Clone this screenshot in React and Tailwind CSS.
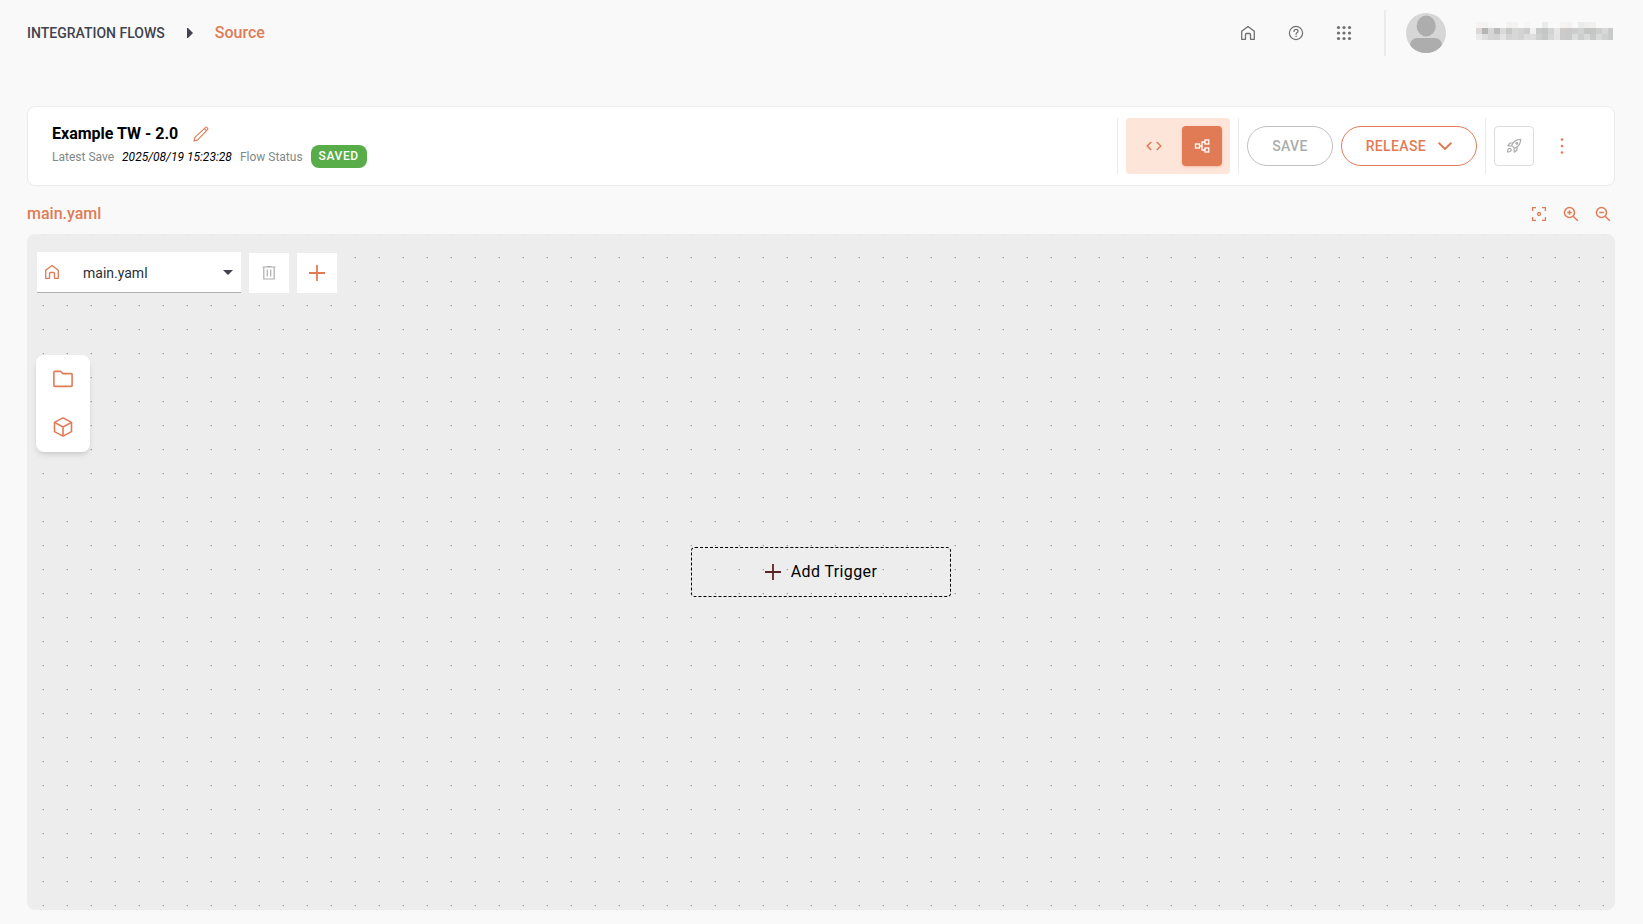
import React, { useState } from 'react';

const HomeIcon = ({ className }) => (
  <svg className={className} width="16" height="16" viewBox="0 0 16 16" fill="none" stroke="currentColor" strokeWidth="1.3">
    <path d="M1.7 14.300V6.300L8 1.500l6.300 4.800v8h-3.800V9.500c0-.6-.4-1-1-1h-3c-.6 0-1 .4-1 1v4.800z" strokeLinejoin="round" />
  </svg>
);

const HelpIcon = () => (
  <svg width="16" height="16" viewBox="0 0 16 16" fill="none" stroke="currentColor" strokeWidth="1.2">
    <circle cx="8" cy="8" r="6.6" />
    <path d="M6 6.4c0-1.2.9-2 2-2s2 .7 2 1.8c0 1.3-1.900 1.500-1.900 3" strokeLinecap="round" />
    <circle cx="8.1" cy="11.2" r="0.8" fill="currentColor" stroke="none" />
  </svg>
);

const AppsIcon = () => (
  <svg width="16" height="16" viewBox="0 0 16 16" fill="currentColor">
    {[2.5, 8, 13.5].map((y) => [2.5, 8, 13.5].map((x) => <circle key={`${x}-${y}`} cx={x} cy={y} r="1.6" />))}
  </svg>
);

const AvatarIcon = () => (
  <svg width="40" height="40" viewBox="0 0 40 40">
    <clipPath id="avatar"><circle cx="20" cy="20" r="20" /></clipPath>
    <g clipPath="url(#avatar)">
      <rect width="40" height="40" fill="#d6d6d6" />
      <ellipse cx="20.200" cy="13" rx="9.600" ry="10.400" fill="#adadad" />
      <rect x="4" y="25" width="32" height="20" rx="7" fill="#adadad" />
    </g>
  </svg>
);

// Redacted user name, three rows of 6px blocks
const NAME_BLOCKS = [
  ['#f5f3f1', '#f5f3f1', '#f8f7f6', null, null, '#f3f1ef', '#f4f3f1', null, '#f6f5f4', null, null, '#e9ebea', null, null, '#f6f3f1', '#f4f2f0', null, '#e9ebea', '#efefee', '#f3f1ef', null, null, null],
  ['#dcd8d8', '#b4b6b5', '#d5d6d5', '#bbbbbb', '#d9dad9', '#c6c8c7', '#d6d7d6', '#d2d3d2', '#cbcccb', '#f1f1f1', '#c8cac9', '#c4c6c5', '#d2d3d2', '#e6e6e6', '#cbcbca', '#cbcac8', '#cccecd', '#d0d2d1', '#c4c6c5', '#c4c6c5', '#cdcfce', '#d6d7d6', '#c9cbca'],
  ['#ebebeb', '#dedfde', '#d4d5d4', '#d2d3d2', '#e2e3e2', '#d2d3d2', '#d6d7d6', '#d2d3d2', '#dededf', '#dededf', '#cecfce', '#c6c8c7', '#d6d7d6', '#e4e4e4', '#cacccb', '#c8cac9', '#dcdcde', '#cccecd', '#dadadc', '#c8cac9', '#d9dad9', '#cfd1d0', '#c9cbca'],
];

const UserName = () => (
  <svg width="137" height="18" viewBox="0 0 137 18" shapeRendering="crispEdges">
    {NAME_BLOCKS.map((row, y) =>
      row.map((fill, x) => fill && <rect key={`${x}-${y}`} x={x * 6} y={y * 6} width="6" height="6" fill={fill} />)
    )}
  </svg>
);

const PencilIcon = () => (
  <svg width="16" height="16" viewBox="0 0 16 16" fill="none" stroke="currentColor" strokeWidth="1.100" strokeLinejoin="round">
    <path d="M1 15l.9-3.600L12.600 1.300c.3-.3.800-.3 1.100 0l1 1c.3.300.3.800 0 1.100L4.500 14.100z" />
    <path d="M11.300 2.600l2.100 2.100" />
  </svg>
);

const CodeIcon = () => (
  <svg width="16" height="16" viewBox="0 0 16 16" fill="none" stroke="currentColor" strokeWidth="1.500">
    <path d="M5.200 4L1.200 8l4 4M10.800 4l4 4-4 4" />
  </svg>
);

const FlowIcon = () => (
  <svg width="16" height="16" viewBox="0 0 16 16" fill="none" stroke="currentColor" strokeWidth="1.300">
    <rect x="1.500" y="6" width="4" height="4" />
    <rect x="11" y="2" width="3.800" height="4" />
    <rect x="11" y="10" width="3.800" height="4" />
    <path d="M5.500 8H8M11 4H8v8h3" />
  </svg>
);

const RocketIcon = () => (
  <svg width="16" height="16" viewBox="0 0 16 16" fill="none" stroke="currentColor" strokeWidth="1.200" strokeLinejoin="round">
    <path d="M14.700 1.300C10.500 1.200 7.800 2.800 5.600 7.300l3.100 3.100C13.200 8.200 14.800 5.500 14.700 1.300z" />
    <circle cx="10.800" cy="5.200" r="0.900" />
    <path d="M7 5H4L1.800 7.600l3.600.5M11 9v3l-2.600 2.200-.5-3.600" />
    <path d="M4.800 10.800c-.7-.7-1.800-.7-2.400 0-.7.700-.9 3.200-.9 3.200s2.600-.2 3.300-.9c.6-.6.6-1.700 0-2.300z" />
  </svg>
);

const FitIcon = () => (
  <svg width="16" height="16" viewBox="0 0 16 16" fill="none" stroke="currentColor" strokeWidth="1.300">
    <path d="M1.600 5V1.600H5M11 1.600h3.400V5M14.400 11v3.400H11M5 14.400H1.600V11" />
    <circle cx="8" cy="8" r="1.500" />
  </svg>
);

const ZoomIcon = ({ plus }) => (
  <svg width="16" height="16" viewBox="0 0 16 16" fill="none" stroke="currentColor" strokeWidth="1.500">
    <circle cx="6.500" cy="6.500" r="5" />
    <path d="M10.200 10.200l4.600 4.600" />
    <path d={plus ? 'M4.200 6.500h4.600M6.500 4.200v4.600' : 'M4.200 6.500h4.600'} />
  </svg>
);

const TrashIcon = () => (
  <svg width="16" height="16" viewBox="0 0 16 16" fill="none" stroke="currentColor" strokeWidth="1.200">
    <path d="M1.500 2h13M5.500 1.500h5M2.800 2v12h10.400V2M6.300 4.500v7M9.700 4.500v7" />
  </svg>
);

const PlusIcon = () => (
  <svg width="16" height="16" viewBox="0 0 16 16" fill="none" stroke="currentColor" strokeWidth="1.800">
    <path d="M8 0v16M0 8h16" />
  </svg>
);

const FolderIcon = () => (
  <svg width="20" height="20" viewBox="0 0 20 20" fill="none" stroke="currentColor" strokeWidth="1.600" strokeLinejoin="round">
    <path d="M.9 16.600V3.200c0-.5.300-.8.800-.8h6.100l1.800 2.200h8.700c.5 0 .8.300.8.800v11.200c0 .5-.3.800-.8.800H1.700c-.5 0-.8-.3-.8-.8z" />
  </svg>
);

const CubeIcon = () => (
  <svg width="20" height="20" viewBox="0 0 20 20" fill="none" stroke="currentColor" strokeWidth="1.600" strokeLinejoin="round">
    <path d="M10 .9l8.500 4.500v9.200L10 19.100l-8.500-4.500V5.400z" />
    <path d="M1.500 5.400L10 10l8.500-4.600M10 10v9.100" />
  </svg>
);

const Divider = () => <span className="w-px self-stretch bg-[#ebebeb]" />;

const TopBar = () => (
  <header className="flex h-[66px] items-center justify-between">
    <nav className="flex items-center">
      <a href="#flows" className="text-sm font-medium text-[#41434e]">INTEGRATION FLOWS</a>
      <svg className="ml-[22px] text-[#41434e]" width="6" height="10" viewBox="0 0 6 10" fill="currentColor">
        <path d="M0 0h1l5 5-5 5H0z" />
      </svg>
      <a href="#source" className="ml-[22px] text-base font-medium text-[#e07b56]">Source</a>
    </nav>
    <div className="flex items-center text-[#6f6f6f]">
      <div className="flex gap-8">
        <button type="button" aria-label="Home"><HomeIcon /></button>
        <button type="button" aria-label="Help"><HelpIcon /></button>
        <button type="button" aria-label="Apps"><AppsIcon /></button>
      </div>
      <span className="ml-8 h-[46px] w-0.5 bg-[#ebebeb]" />
      <span className="ml-5"><AvatarIcon /></span>
      <span className="mr-0.5 ml-[30px] pb-1"><UserName /></span>
    </div>
  </header>
);

const FlowHeader = () => {
  const [view, setView] = useState('flow');
  const active = 'rounded bg-[#e07b56] text-white shadow shadow-[#e07b56]/30';

  return (
    <section className="mt-10 flex h-20 items-center justify-between rounded-lg border border-[#ebebeb] bg-white pr-8 pl-6">
      <div className="flex flex-col gap-px">
        <div className="flex items-center">
          <h1 className="text-base leading-5 font-bold text-black">Example TW - 2.0</h1>
          <button type="button" aria-label="Rename" className="ml-[15px] text-[#e07b56]"><PencilIcon /></button>
        </div>
        <div className="flex items-center gap-2 text-xs text-[#7f8a86]">
          <span>Latest Save</span>
          <span className="text-black italic">2025/08/19 15:23:28</span>
          <span>Flow Status</span>
          <span className="rounded-lg bg-[#58ad48] px-2 py-1 text-xs leading-[15px] font-medium tracking-wider text-white">SAVED</span>
        </div>
      </div>
      <div className="flex h-14 items-center gap-2">
        <Divider />
        <div className="flex h-14 items-center gap-2 rounded bg-[#fde5da] px-2 text-[#e07b56]">
          <button
            type="button"
            aria-label="Code view"
            onClick={() => setView('code')}
            className={`flex size-10 items-center justify-center ${view === 'code' ? active : ''}`}
          >
            <CodeIcon />
          </button>
          <button
            type="button"
            aria-label="Flow view"
            onClick={() => setView('flow')}
            className={`flex size-10 items-center justify-center ${view === 'flow' ? active : ''}`}
          >
            <FlowIcon />
          </button>
        </div>
        <Divider />
        <button type="button" disabled className="h-10 rounded-full border border-[#c0c0c0] px-6 text-sm font-medium tracking-wide text-[#a8adab]">
          SAVE
        </button>
        <button type="button" className="flex h-10 items-center gap-3 rounded-full border border-[#e07b56] px-6 text-sm font-medium tracking-wide text-[#e07b56]">
          RELEASE
          <svg width="14" height="8" viewBox="0 0 14 8" fill="none" stroke="currentColor" strokeWidth="2">
            <path d="M.6.700L7 7 13.400.700" />
          </svg>
        </button>
        <Divider />
        <button type="button" aria-label="Deploy" disabled className="flex size-10 items-center justify-center rounded border border-[#dcdcdc] text-[#adadad]">
          <RocketIcon />
        </button>
        <button type="button" aria-label="More" className="flex size-10 items-center justify-center text-[#e07b56]">
          <svg width="4" height="16" viewBox="0 0 4 16" fill="currentColor">
            <circle cx="2" cy="1.500" r="1.300" />
            <circle cx="2" cy="8" r="1.300" />
            <circle cx="2" cy="14.500" r="1.300" />
          </svg>
        </button>
      </div>
    </section>
  );
};

const CanvasToolbar = () => (
  <div className="relative flex items-end gap-2 pt-[18px] pl-[10px]">
    <div className="relative flex h-[41px] w-[204px] items-center border-b border-[#b0b0b0] bg-white">
      <HomeIcon className="pointer-events-none absolute left-[7px] text-[#e07b56]" />
      <select aria-label="File" className="h-full w-full appearance-none pt-0.5 pl-[46px] text-sm text-[#2d2d35]">
        <option>main.yaml</option>
      </select>
      <svg className="pointer-events-none absolute right-2 text-[#41434e]" width="10" height="5" viewBox="0 0 10 5" fill="currentColor">
        <path d="M0 0h10L5 5z" />
      </svg>
    </div>
    <button type="button" aria-label="Delete file" disabled className="flex size-10 items-center justify-center bg-white text-[#adadad]">
      <TrashIcon />
    </button>
    <button type="button" aria-label="Add file" className="flex size-10 items-center justify-center bg-white text-[#e07b56]">
      <PlusIcon />
    </button>
  </div>
);

const Canvas = () => (
  <section className="relative flex-1 overflow-hidden rounded-lg bg-[#ededed]">
    <svg className="absolute inset-0 size-full">
      <pattern id="dots" x="4" y="11" width="24" height="24" patternUnits="userSpaceOnUse">
        <circle cx="12.300" cy="12.600" r="0.700" fill="#81818a" />
      </pattern>
      <rect width="100%" height="100%" fill="url(#dots)" />
    </svg>
    <CanvasToolbar />
    <div className="relative mt-[62px] ml-[9px] flex h-[97px] w-[54px] flex-col items-center rounded-lg bg-white text-[#e07b56] shadow-md">
      <button type="button" aria-label="Files" className="flex h-12 w-full items-center justify-center"><FolderIcon /></button>
      <button type="button" aria-label="Components" className="flex h-12 w-full items-center justify-center"><CubeIcon /></button>
    </div>
    <button
      type="button"
      className="absolute top-1/2 left-1/2 flex h-[50px] w-[260px] -translate-1/2 items-center justify-center gap-[10px] rounded border border-dashed border-black text-base tracking-wide text-black"
    >
      <span className="text-[#5a2420]"><PlusIcon /></span>
      Add Trigger
    </button>
  </section>
);

const App = () => (
  <div className="flex min-h-screen flex-col bg-[#f9f9f9] px-7 pb-[14px] pl-[27px] font-[Roboto,sans-serif]">
    <TopBar />
    <FlowHeader />
    <div className="flex h-12 items-center justify-between pt-2 text-[#e07b56]">
      <h2 className="text-base font-medium">main.yaml</h2>
      <div className="mr-1 flex gap-4">
        <button type="button" aria-label="Fit view"><FitIcon /></button>
        <button type="button" aria-label="Zoom in"><ZoomIcon plus /></button>
        <button type="button" aria-label="Zoom out"><ZoomIcon /></button>
      </div>
    </div>
    <Canvas />
  </div>
);

export default App;
